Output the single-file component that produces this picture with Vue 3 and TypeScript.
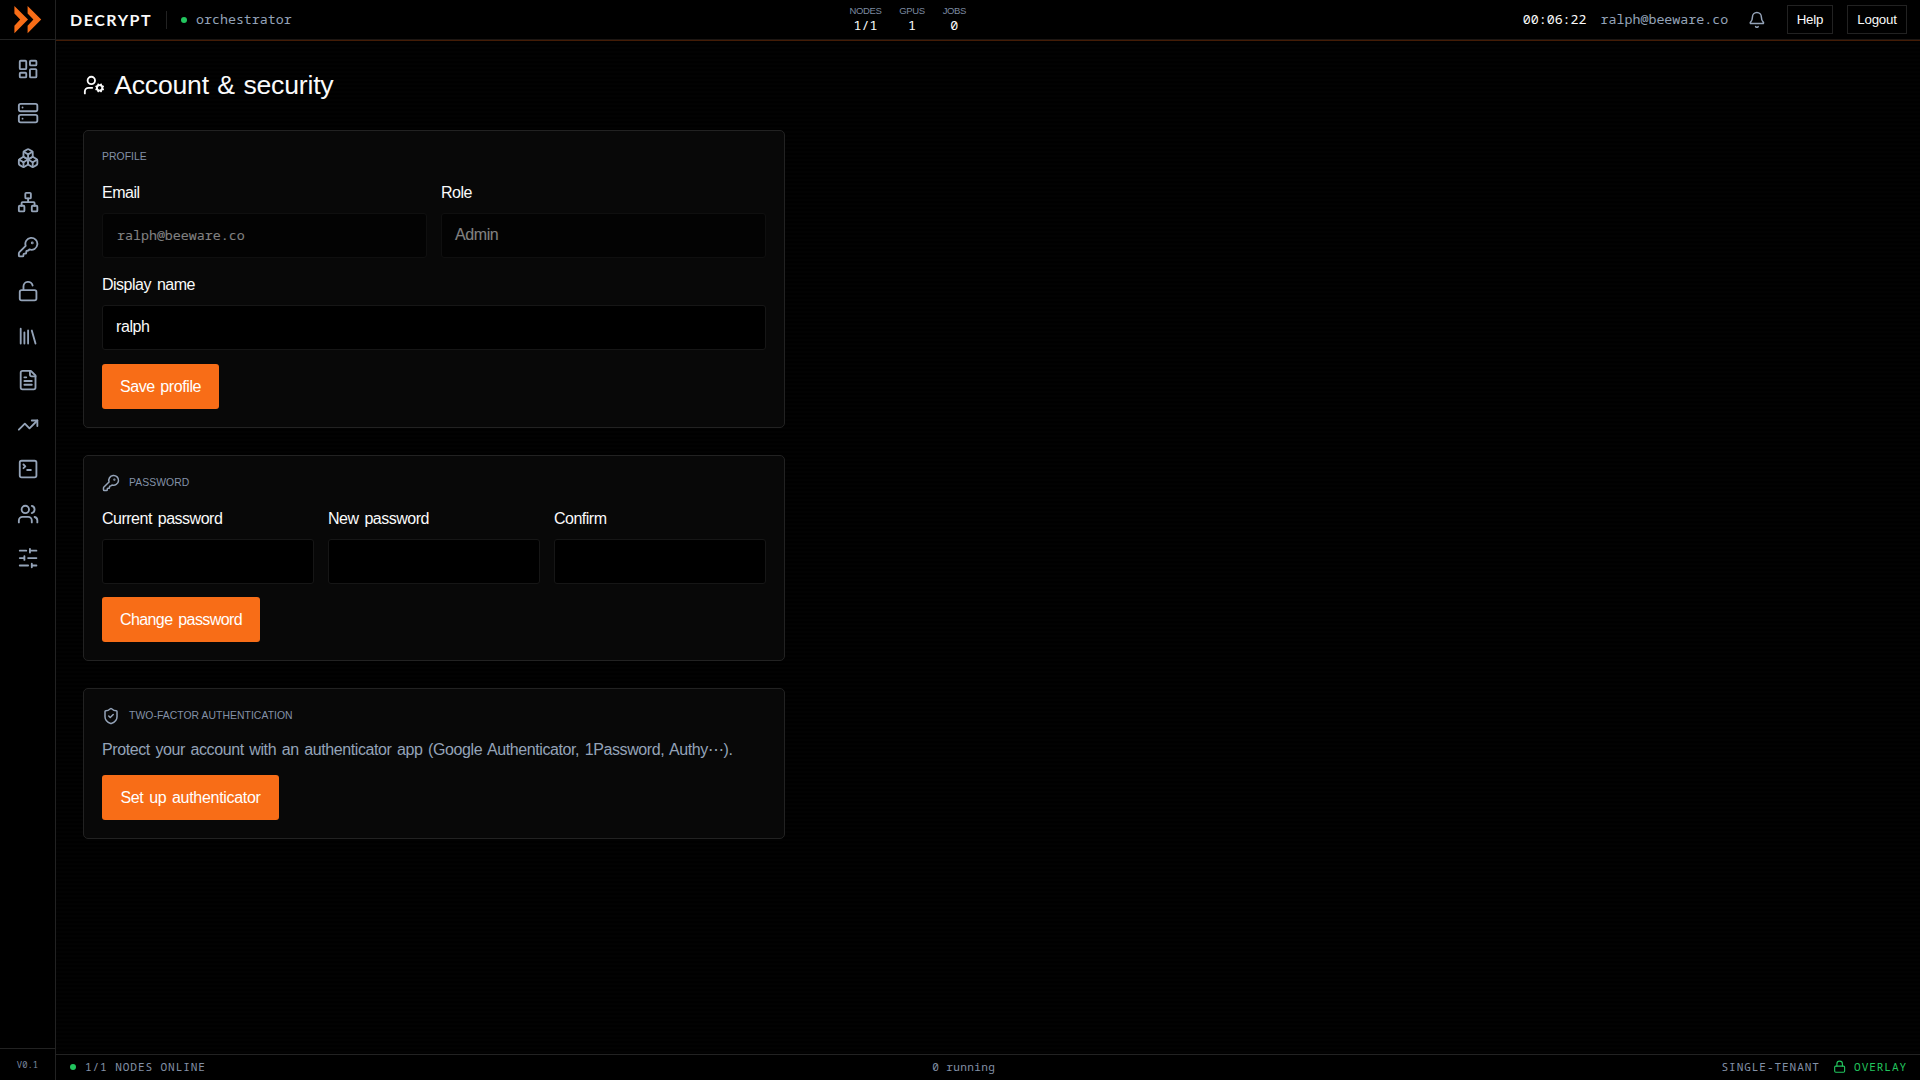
<script setup lang="ts">
interface Icon {
  name: string
  body: string
}

const keyIcon =
  '<path d="M2.586 17.414A2 2 0 0 0 2 18.828V21a1 1 0 0 0 1 1h3a1 1 0 0 0 1-1v-1a1 1 0 0 1 1-1h1a1 1 0 0 0 1-1v-1a1 1 0 0 1 1-1h.172a2 2 0 0 0 1.414-.586l.814-.814a6.5 6.5 0 1 0-4-4z"/><circle cx="16.5" cy="7.5" r=".5" fill="currentColor"/>'

const nav: Icon[] = [
  { name: 'dashboard', body: '<rect width="7" height="9" x="3" y="3" rx="1"/><rect width="7" height="5" x="14" y="3" rx="1"/><rect width="7" height="9" x="14" y="12" rx="1"/><rect width="7" height="5" x="3" y="16" rx="1"/>' },
  { name: 'nodes', body: '<rect width="20" height="8" x="2" y="2" rx="2"/><rect width="20" height="8" x="2" y="14" rx="2"/><path d="M6 6h.01M6 18h.01"/>' },
  { name: 'clusters', body: '<path d="M2.97 12.92A2 2 0 0 0 2 14.63v3.24a2 2 0 0 0 .97 1.71l3 1.8a2 2 0 0 0 2.06 0L12 19v-5.5l-5-3-4.03 2.42Z"/><path d="m7 16.5-4.74-2.85"/><path d="m7 16.5 5-3"/><path d="M7 16.5v5.17"/><path d="M12 13.5V19l3.97 2.38a2 2 0 0 0 2.06 0l3-1.8a2 2 0 0 0 .97-1.71v-3.24a2 2 0 0 0-.97-1.71L17 10.5l-5 3Z"/><path d="m17 16.5-5-3"/><path d="m17 16.5 4.74-2.85"/><path d="M17 16.5v5.17"/><path d="M7.97 4.42A2 2 0 0 0 7 6.13v4.37l5 3 5-3V6.13a2 2 0 0 0-.97-1.71l-3-1.8a2 2 0 0 0-2.06 0l-3 1.8Z"/><path d="M12 8 7.26 5.15"/><path d="m12 8 4.74-2.85"/><path d="M12 13.5V8"/>' },
  { name: 'network', body: '<rect x="16" y="16" width="6" height="6" rx="1"/><rect x="2" y="16" width="6" height="6" rx="1"/><rect x="9" y="2" width="6" height="6" rx="1"/><path d="M5 16v-3a1 1 0 0 1 1-1h12a1 1 0 0 1 1 1v3M12 12V8"/>' },
  { name: 'keys', body: keyIcon },
  { name: 'unlock', body: '<rect width="18" height="11" x="3" y="11" rx="2"/><path d="M7 11V7a5 5 0 0 1 9.9-1"/>' },
  { name: 'library', body: '<path d="m16 6 4 14M12 6v14M8 8v12M4 4v16"/>' },
  { name: 'reports', body: '<path d="M15 2H6a2 2 0 0 0-2 2v16a2 2 0 0 0 2 2h12a2 2 0 0 0 2-2V7Z"/><path d="M14 2v4a2 2 0 0 0 2 2h4M10 9H8M16 13H8M16 17H8"/>' },
  { name: 'trends', body: '<path d="M16 7h6v6"/><path d="m22 7-8.5 8.5-5-5L2 17"/>' },
  { name: 'terminal', body: '<path d="m7 11 2-2-2-2M11 13h4"/><rect width="18" height="18" x="3" y="3" rx="2"/>' },
  { name: 'users', body: '<path d="M16 21v-2a4 4 0 0 0-4-4H6a4 4 0 0 0-4 4v2M16 3.128a4 4 0 0 1 0 7.744M22 21v-2a4 4 0 0 0-3-3.87"/><circle cx="9" cy="7" r="4"/>' },
  { name: 'settings', body: '<path d="M21 4h-7M10 4H3M21 12h-9M8 12H3M21 20h-5M12 20H3M14 2v4M8 10v4M16 18v4"/>' },
]

const stats = [
  { label: 'NODES', value: '1/1' },
  { label: 'GPUS', value: '1' },
  { label: 'JOBS', value: '0' },
]

const passwordFields = ['Current password', 'New password', 'Confirm']
</script>

<template>
  <div class="app">
    <aside class="sidebar">
      <div class="logo">
        <svg width="28" height="28" viewBox="0 0 28 28" fill="#f86d17">
          <path d="M.4 0 14 13.6.4 27.2v-7.4L6.2 13.6.4 7.4Z" />
          <path d="M13.6 0 27.2 13.6 13.6 27.2v-7.4l5.8-6.2-5.8-6.2Z" />
        </svg>
      </div>
      <nav class="nav">
        <a v-for="icon in nav" :key="icon.name" class="nav-item">
          <svg class="icon" viewBox="0 0 24 24" v-html="icon.body" />
        </a>
      </nav>
      <div class="version">V0.1</div>
    </aside>

    <div class="shell">
      <header class="topbar">
        <div class="brand-group">
          <span class="brand">DECRYPT</span>
          <span class="divider" />
          <span class="dot" />
          <span class="role">orchestrator</span>
        </div>
        <div class="stats">
          <div v-for="s in stats" :key="s.label" class="stat">
            <span class="stat-label">{{ s.label }}</span>
            <span class="stat-value">{{ s.value }}</span>
          </div>
        </div>
        <div class="session">
          <span class="clock">00:06:22</span>
          <span class="user">ralph@beeware.co</span>
          <svg class="icon bell" viewBox="0 0 24 24">
            <path d="M10.268 21a2 2 0 0 0 3.464 0" />
            <path d="M3.262 15.326A1 1 0 0 0 4 17h16a1 1 0 0 0 .74-1.673C19.41 13.956 18 12.499 18 8A6 6 0 0 0 6 8c0 4.499-1.411 5.956-2.738 7.326" />
          </svg>
          <button class="small-btn help">Help</button>
          <button class="small-btn logout">Logout</button>
        </div>
      </header>

      <main class="main">
        <h1 class="title">
          <svg class="icon title-icon" viewBox="0 0 24 24">
            <path d="M10 15H6a4 4 0 0 0-4 4v2m12.305-4.47.923-.382m0-2.296-.923-.383m2.547-1.241-.383-.923m.383 6.467-.383.924m2.679-6.468.383-.923m-.001 7.391-.382-.924m1.624-3.92.924-.383m-.924 2.679.924.383" />
            <circle cx="18" cy="15" r="3" />
            <circle cx="9" cy="7" r="4" />
          </svg>
          <span>Account &amp; security</span>
        </h1>

        <section class="card profile">
          <h2 class="card-title">PROFILE</h2>
          <div class="grid two">
            <label class="field">
              <span class="label">Email</span>
              <span class="input mono disabled">ralph@beeware.co</span>
            </label>
            <label class="field">
              <span class="label">Role</span>
              <span class="input disabled">Admin</span>
            </label>
          </div>
          <label class="field wide">
            <span class="label">Display name</span>
            <span class="input">ralph</span>
          </label>
          <button class="primary save">Save profile</button>
        </section>

        <section class="card password">
          <h2 class="card-title">
            <svg class="icon card-icon" viewBox="0 0 24 24" v-html="keyIcon" />
            <span>PASSWORD</span>
          </h2>
          <div class="grid three">
            <label v-for="f in passwordFields" :key="f" class="field">
              <span class="label">{{ f }}</span>
              <span class="input" />
            </label>
          </div>
          <button class="primary change">Change password</button>
        </section>

        <section class="card twofactor">
          <h2 class="card-title">
            <svg class="icon card-icon" viewBox="0 0 24 24">
              <path d="M20 13c0 5-3.5 7.5-7.66 8.95a1 1 0 0 1-.67-.01C7.5 20.5 4 18 4 13V6a1 1 0 0 1 1-1c2 0 4.5-1.2 6.24-2.72a1.17 1.17 0 0 1 1.52 0C14.51 3.81 17 5 19 5a1 1 0 0 1 1 1z" />
              <path d="m9 12 2 2 4-4" />
            </svg>
            <span>TWO-FACTOR AUTHENTICATION</span>
          </h2>
          <p class="copy">Protect your account with an authenticator app (Google Authenticator, 1Password, Authy<span class="dots">⋯</span>).</p>
          <button class="primary setup">Set up authenticator</button>
        </section>
      </main>

      <footer class="statusbar">
        <div class="status-left"><span class="dot" /><span>1/1 NODES ONLINE</span></div>
        <span class="running">0 running</span>
        <div class="status-right">
          <span>SINGLE-TENANT</span>
          <span class="overlay">
            <svg class="icon lock" viewBox="0 0 24 24">
              <rect width="18" height="11" x="3" y="11" rx="2" />
              <path d="M7 11V7a5 5 0 0 1 10 0v4" />
            </svg>
            <span>OVERLAY</span>
          </span>
        </div>
      </footer>
    </div>
  </div>
</template>

<style>
body {
  background: #000;
}
</style>

<style scoped>
.app {
  --sans: "Liberation Sans", sans-serif;
  --mono: "Noto Sans Mono", "Noto Sans Mono CJK SC", "DejaVu Sans Mono", monospace;
  --line: #222;
  --muted: #94a3b8;
  display: flex;
  width: 1920px;
  height: 1080px;
  overflow: hidden;
  background: #000;
  color: #fafafa;
  font: 16px/24px var(--sans);
}
.app *,
.app {
  box-sizing: border-box;
}
.icon {
  width: 22.2px;
  height: 22.2px;
  flex: none;
  fill: none;
  stroke: currentColor;
  stroke-width: 2;
  stroke-linecap: round;
  stroke-linejoin: round;
}
.sidebar {
  display: flex;
  flex-direction: column;
  width: 56px;
  flex: none;
  border-right: 1px solid var(--line);
  color: var(--muted);
}
.logo {
  display: flex;
  justify-content: center;
  height: 40px;
  padding-top: 6px;
  border-bottom: 1px solid var(--line);
}
.nav {
  flex: 1;
  padding-top: 9px;
  padding-left: 1px;
}
.nav-item {
  display: flex;
  align-items: center;
  justify-content: center;
  height: 40px;
  margin-bottom: 4.48px;
}
.version {
  height: 32px;
  border-top: 1px solid var(--line);
  text-align: center;
  color: #7c8aa0;
  font: 8.9px/31px var(--mono);
}
.shell {
  display: flex;
  flex-direction: column;
  flex: 1;
}
.topbar {
  display: flex;
  justify-content: space-between;
  height: 41px;
  border-bottom: 1px solid #431c06;
  padding: 0 13px 0 14px;
  box-shadow: inset 0 -1px 0 #1c1613;
}
.brand-group,
.session {
  display: flex;
  align-items: center;
  height: 39px;
}
.brand {
  width: 96px;
  font: 700 16px/24px Lato, sans-serif;
  letter-spacing: 1.55px;
}
.divider {
  width: 1px;
  height: 18px;
  margin-right: 14px;
  background: var(--line);
}
.dot {
  width: 6px;
  height: 6px;
  border-radius: 50%;
  background: #22c55e;
}
.role,
.user,
.clock {
  padding-bottom: 2px;
  font: 13.3px/20px var(--mono);
}
.role,
.user {
  color: var(--muted);
}
.role {
  margin-left: 9px;
}
.stats {
  display: flex;
  gap: 18px;
  padding: 4px 0 0 1px;
}
.stat {
  display: flex;
  flex-direction: column;
  align-items: center;
}
.stat-label {
  color: #7c8aa0;
  font-size: 9.5px;
  line-height: 14px;
  letter-spacing: -0.4px;
}
.stat-value {
  font: 13.3px/14px var(--mono);
}
.session {
  justify-content: flex-end;
}
.clock {
  margin-right: 14px;
}
.bell {
  width: 17.8px;
  height: 17.8px;
  margin: 0 21px 0 20px;
  color: var(--muted);
}
.small-btn {
  height: 29px;
  padding: 0;
  border: 1px solid var(--line);
  background: #000;
  color: #fafafa;
  font: 13.3px/20px var(--sans);
  letter-spacing: -0.2px;
}
.help {
  width: 46px;
  margin-right: 14px;
}
.logout {
  width: 60px;
}
.main {
  flex: 1;
  padding: 26px 27px 0;
  background: repeating-linear-gradient(to bottom, #000 0 2px, #020202 2px 4px);
}
.title {
  display: flex;
  align-items: center;
  gap: 9px;
  height: 36px;
  margin: 0 0 27px;
  font: 400 26.6px/36px var(--sans);
  letter-spacing: -0.2px;
  word-spacing: 1.3px;
}
.title-icon {
  margin-top: 1px;
}
.card {
  width: 702px;
  margin-bottom: 27px;
  padding: 18px 18px 0;
  border: 1px solid var(--line);
  border-radius: 5px;
  background: #080808;
}
.profile {
  height: 298px;
}
.password {
  height: 206px;
}
.twofactor {
  height: 151px;
}
.card-title {
  display: flex;
  align-items: center;
  gap: 9px;
  height: 16px;
  margin: 0 0 16px;
  color: #8391a7;
  font: 400 10.4px/18px var(--sans);
  letter-spacing: 0.05px;
}
.password .card-title {
  height: 18px;
  margin-bottom: 15px;
}
.twofactor .card-title {
  height: 18px;
  margin-bottom: 13px;
}
.card-icon {
  width: 18px;
  height: 18px;
  color: var(--muted);
}
.grid {
  display: grid;
  gap: 14px;
}
.two {
  grid-template-columns: repeat(2, 1fr);
}
.three {
  grid-template-columns: repeat(3, 1fr);
}
.field {
  display: block;
}
.label {
  display: block;
  height: 24px;
  margin-bottom: 8px;
  letter-spacing: -0.5px;
  word-spacing: 2px;
}
.input {
  display: block;
  height: 45px;
  padding: 0 13px;
  border: 1px solid #161616;
  border-radius: 3px;
  background: #000;
  line-height: 42px;
  letter-spacing: -0.4px;
}
.disabled {
  opacity: 0.5;
}
.mono {
  padding-left: 14px;
  font-family: var(--mono);
  font-size: 13.3px;
  letter-spacing: 0;
}
.wide {
  margin-top: 15px;
}
.primary {
  display: block;
  height: 45px;
  margin-top: 14px;
  padding: 0;
  border: 0;
  border-radius: 3px;
  background: #f86d17;
  color: #fff;
  font: 16px/24px var(--sans);
  letter-spacing: -0.4px;
  word-spacing: 1.5px;
}
.save {
  width: 117px;
}
.change {
  width: 158px;
  margin-top: 13px;
  letter-spacing: -0.6px;
  word-spacing: 2px;
}
.setup {
  width: 177px;
  margin-top: 13px;
  letter-spacing: -0.3px;
}
.copy {
  margin: 0;
  color: var(--muted);
  white-space: nowrap;
  letter-spacing: -0.4px;
  word-spacing: 1.5px;
}
.statusbar {
  display: flex;
  justify-content: space-between;
  align-items: center;
  height: 26px;
  padding: 0 13px 1px 14px;
  border-top: 1px solid var(--line);
  color: #8391a7;
  font: 11.1px/16px var(--mono);
  letter-spacing: 0.9px;
}
.running {
  letter-spacing: 0.35px;
}
.status-left,
.status-right,
.overlay {
  display: flex;
  align-items: center;
}
.status-left {
  gap: 9px;
}
.status-right {
  justify-content: flex-end;
  gap: 13px;
}
.overlay {
  gap: 8px;
  color: #22c55e;
}
.lock {
  width: 13.3px;
  height: 13.3px;
}
</style>
